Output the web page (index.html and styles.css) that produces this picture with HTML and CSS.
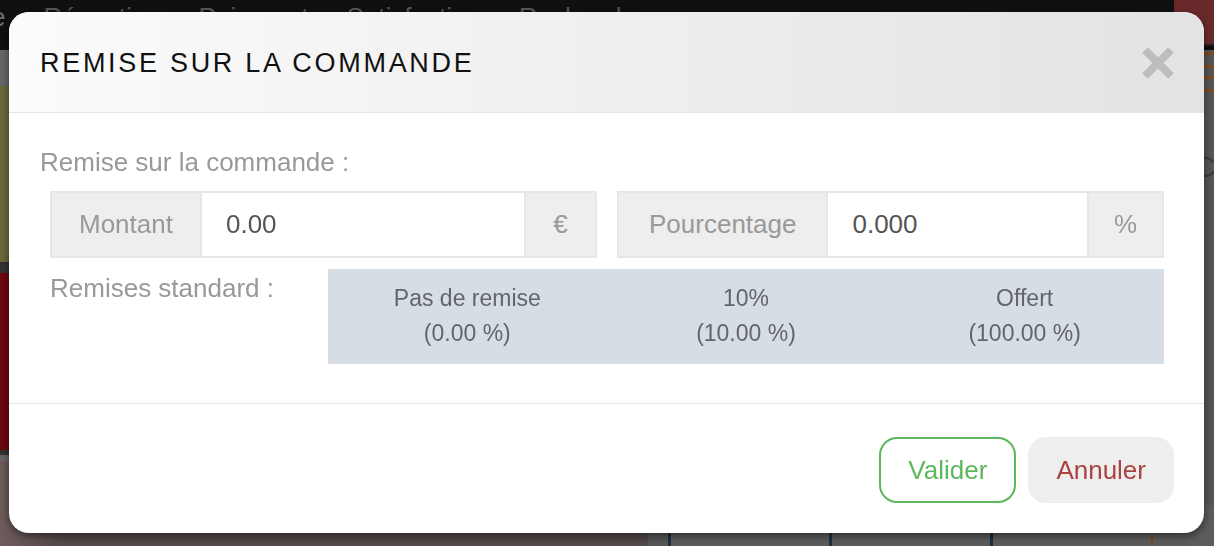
FILE: index.html
```html
<!DOCTYPE html>
<html lang="fr">
<head>
<meta charset="utf-8">
<title>Remise sur la commande</title>
<link rel="stylesheet" href="styles.css">
</head>
<body>
<div class="app">
  <nav class="topnav">
    <span class="nav-item nav-first">Vente</span>
    <span class="nav-item">Réception</span>
    <span class="nav-item">Paiement</span>
    <span class="nav-item">Satisfaction</span>
    <span class="nav-item">Recherche</span>
    <span class="nav-spacer"></span>
    <span class="nav-red"></span>
  </nav>
  <div class="main">
    <div class="col-left">
      <div class="tile tile-head"></div>
      <div class="tile tile-olive"></div>
      <div class="tile tile-red"></div>
      <div class="tile tile-grey"></div>
      <div class="tile tile-brown"></div>
    </div>
    <div class="col-mid"></div>
    <div class="col-right">
      <div class="right-area">
        <div class="deco deco-1"></div>
        <div class="deco deco-2"></div>
        <div class="deco-letter">C</div>
      </div>
      <div class="cards">
        <div class="card"></div>
        <div class="card"></div>
        <div class="card"></div>
        <div class="card card-orange"></div>
      </div>
    </div>
  </div>
</div>

<div class="backdrop">
  <div class="modal">
    <div class="modal-header">
      <h4 class="modal-title">REMISE SUR LA COMMANDE</h4>
      <svg class="close-icon" width="34" height="34" viewBox="0 0 34 34" aria-label="Fermer">
        <line x1="4" y1="4" x2="30" y2="30" stroke="#bdbdbd" stroke-width="8"/>
        <line x1="30" y1="4" x2="4" y2="30" stroke="#bdbdbd" stroke-width="8"/>
      </svg>
    </div>
    <div class="modal-body">
      <div class="section-label">Remise sur la commande :</div>
      <div class="group-row">
        <div class="input-group">
          <span class="addon addon-left">Montant</span>
          <input class="field" type="text" value="0.00">
          <span class="addon addon-right">€</span>
        </div>
        <div class="input-group">
          <span class="addon addon-left addon-wide">Pourcentage</span>
          <input class="field" type="text" value="0.000">
          <span class="addon addon-right addon-pct">%</span>
        </div>
      </div>
      <div class="std-row">
        <div class="std-label">Remises standard :</div>
        <div class="std-box">
          <div class="std-item"><div>Pas de remise</div><div>(0.00 %)</div></div>
          <div class="std-item"><div>10%</div><div>(10.00 %)</div></div>
          <div class="std-item"><div>Offert</div><div>(100.00 %)</div></div>
        </div>
      </div>
    </div>
    <div class="modal-footer">
      <button class="btn btn-ok" type="button">Valider</button>
      <button class="btn btn-cancel" type="button">Annuler</button>
    </div>
  </div>
</div>
</body>
</html>
```

FILE: styles.css
```css
* { box-sizing: border-box; }

html, body {
  margin: 0;
  padding: 0;
  height: 100%;
  overflow: hidden;
}

body {
  font-family: "Liberation Sans", Arial, sans-serif;
  background: #545454;
}

/* ---------- background application (already dimmed) ---------- */
.app {
  display: flex;
  flex-direction: column;
  height: 100%;
}

.topnav {
  display: flex;
  gap: 38px;
  height: 50px;
  background: #101010;
  padding-top: 2px;
  flex: none;
}

.nav-item {
  font-size: 26px;
  line-height: 30px;
  color: #585858;
  white-space: nowrap;
  flex: none;
}

.nav-first {
  margin-left: -61px;
  color: #6e6e6e;
}

.nav-spacer { flex: 1; }

.nav-red {
  flex: none;
  width: 40px;
  height: 46px;
  margin-top: -2px;
  background: #6a2a2c;
  border-bottom: 2px solid #222;
}

.main {
  flex: 1;
  display: flex;
}

.col-left {
  flex: none;
  width: 320px;
  display: flex;
  flex-direction: column;
}

.tile-head { height: 36px; background: #666; }
.tile-olive { background: #6a683a; border-bottom: 11px solid #333; height: 187px; }
.tile-red { background: #6a080d; border-bottom: 5px solid #333; height: 182px; }
.tile-grey { height: 6px; background: #666; }
.tile-brown { flex: 1; background: linear-gradient(90deg, #6e5c5c, #544848 60px); }

.col-mid {
  flex: none;
  width: 328px;
  background: #544848;
}

.col-right {
  flex: 1;
  min-width: 0;
  display: flex;
  flex-direction: column;
  background: #575757;
}

.right-area {
  flex: 1;
  display: flex;
  flex-direction: column;
  align-items: flex-end;
  padding-top: 2px;
}

.deco {
  width: 20px;
  height: 16px;
  border: 3px solid #7a4a22;
  border-right: none;
  border-radius: 10px 0 0 10px;
  margin-bottom: 8px;
}

.deco-letter {
  width: 20px;
  font-size: 30px;
  color: #3e3e3e;
  margin-top: 50px;
}

.cards {
  display: flex;
  height: 40px;
  padding-left: 20px;
}

.card {
  flex: none;
  width: 161px;
  border-left: 3px solid #1b2e46;
  background: #5c5c5c;
}

.card-orange {
  border-left: 2px solid #7a4a22;
  flex: 1;
}

/* ---------- modal ---------- */
.backdrop {
  position: fixed;
  inset: 0;
  padding: 12px 0 0 9px;
}

.modal {
  width: 1195px;
  background: #fff;
  border-radius: 20px;
  overflow: hidden;
  box-shadow: 0 3px 9px rgba(0, 0, 0, 0.5);
}

.modal-header {
  height: 101px;
  display: flex;
  align-items: center;
  justify-content: space-between;
  padding: 2px 30px 0 31px;
  background: linear-gradient(90deg, #fbfbfb 0%, #e3e3e3 100%);
  border-bottom: 1px solid #e3e3e3;
}

.modal-title {
  margin: 0;
  font-size: 27px;
  font-weight: normal;
  letter-spacing: 2.7px;
  color: #111;
  line-height: 1;
}

.close-icon {
  display: block;
  margin-right: -1px;
}

.modal-body {
  padding: 31px 30px 39px 31px;
  color: #999;
}

.section-label {
  font-size: 26px;
  line-height: 36px;
  margin-bottom: 11px;
}

.group-row {
  display: flex;
  gap: 20px;
  padding: 0 10px;
}

.input-group {
  flex: 1 1 0;
  min-width: 0;
  display: flex;
  height: 67px;
  border: 2px solid #e6e6e6;
}

.addon {
  flex: none;
  display: flex;
  align-items: center;
  justify-content: center;
  padding: 0 27px;
  background: #eeeeee;
  font-size: 26px;
  color: #999;
}

.addon-wide { padding: 0 30px; }

.addon-left { border-right: 2px solid #e6e6e6; }
.addon-right { border-left: 2px solid #e6e6e6; min-width: 71px; padding: 0 24px; }
.addon-pct { min-width: 75px; }

.field {
  flex: 1 1 0;
  width: 0;
  min-width: 0;
  border: none;
  outline: none;
  background: #fff;
  padding: 0 24px;
  font-family: inherit;
  font-size: 26px;
  color: #555;
}

.std-row {
  display: flex;
  margin-top: 11px;
  padding: 0 10px;
}

.std-label {
  flex: none;
  width: 278px;
  font-size: 26px;
  line-height: 38px;
}

.std-box {
  flex: 1;
  display: grid;
  grid-template-columns: repeat(3, 1fr);
  background: #d6dde4;
  padding: 12px 0 13px;
}

.std-item {
  text-align: center;
  font-size: 23px;
  line-height: 35px;
  color: #62666b;
}

.modal-footer {
  display: flex;
  justify-content: flex-end;
  gap: 12px;
  padding: 33px 30px 30px;
  border-top: 1px solid #e5e5e5;
}

.btn {
  height: 66px;
  padding: 0 26px;
  border-radius: 18px;
  font-family: inherit;
  font-size: 26px;
  border: 2px solid transparent;
  background: #fff;
}

.btn-ok {
  border-color: #5cb85c;
  color: #5cb85c;
  padding: 0 27px;
}

.btn-cancel {
  background: #eeeeee;
  border-color: #eeeeee;
  color: #a94442;
}
```
